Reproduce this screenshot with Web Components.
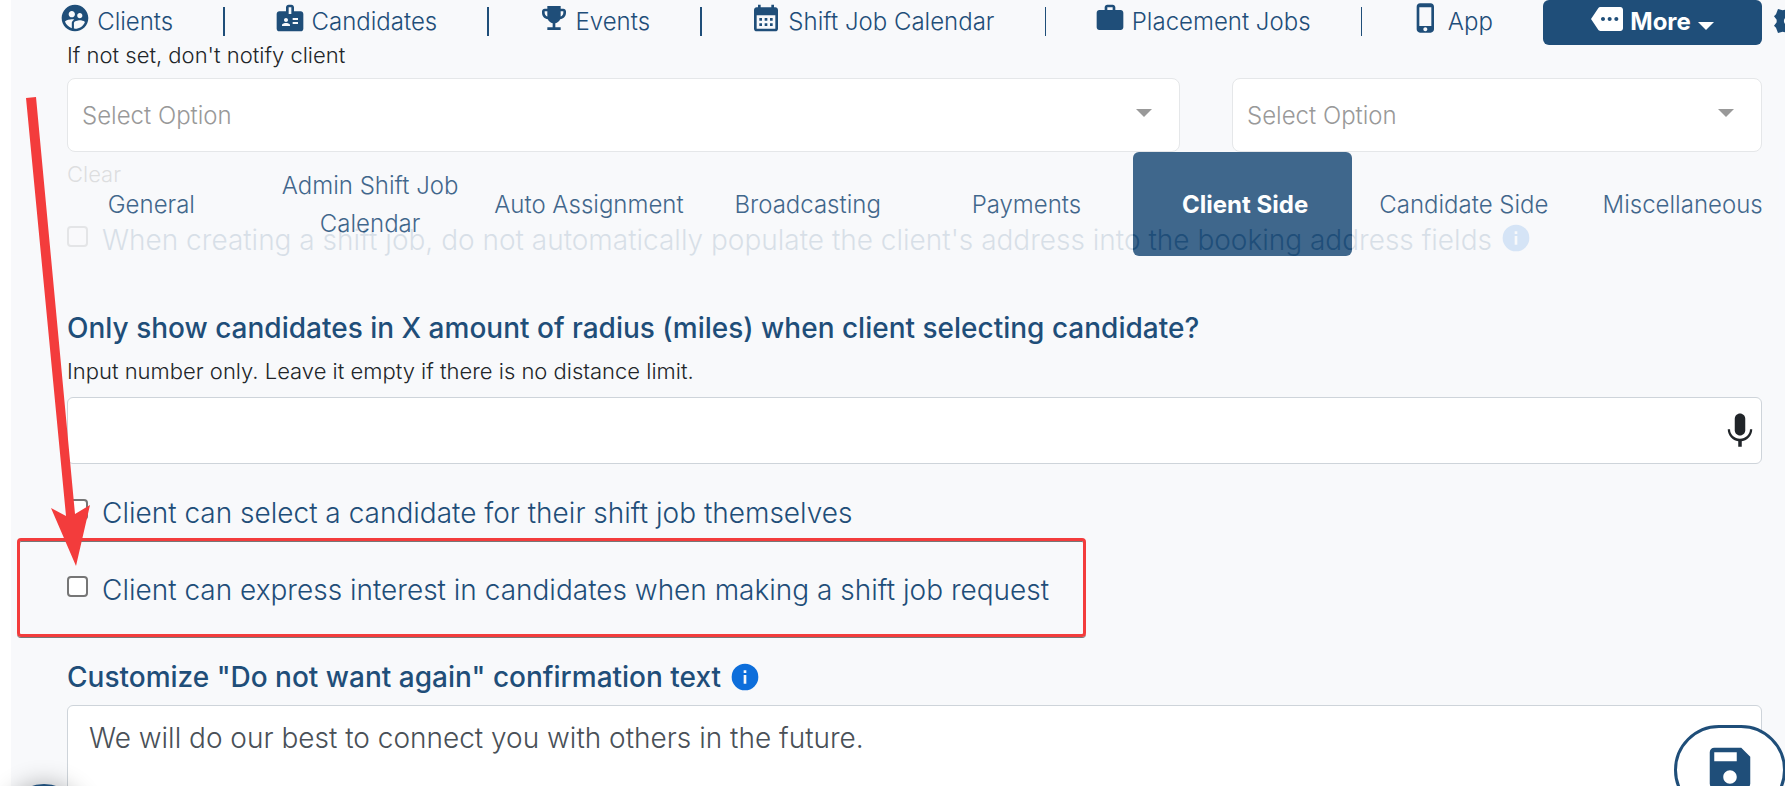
<!DOCTYPE html>
<html lang="en">
<head>
<meta charset="utf-8">
<meta name="viewport" content="width=device-width, initial-scale=1">
<title>Settings - Client Side</title>
<style>
    html {
        --navy: #1f4e79;
        --panel: #f8f9fb;
        --border: #ced4da;
        --info: #0d6edb;
        --red: #f33c3c;
    }

    body {
        margin: 0;
        overflow: hidden;
        background: white;
        color: #212529;
        font: 300 24px/30px Inter, "Liberation Sans", sans-serif;
    }
</style>
</head>
<body>
<settings-page>
    <nav-bar slot="nav">
        <nav-item icon="clients">Clients</nav-item>
        <nav-item icon="badge">Candidates</nav-item>
        <nav-item icon="trophy">Events</nav-item>
        <nav-item icon="calendar" thin>Shift Job Calendar</nav-item>
        <nav-item icon="work" thin>Placement Jobs</nav-item>
        <nav-item icon="phone" last>App</nav-item>
        <more-button slot="end">More</more-button>
        <gear-link slot="end"></gear-link>
    </nav-bar>

    <tab-bar slot="tabs">
        <tab-item>General</tab-item>
        <tab-item>Admin Shift Job Calendar</tab-item>
        <tab-item>Auto Assignment</tab-item>
        <tab-item>Broadcasting</tab-item>
        <tab-item>Payments</tab-item>
        <tab-item active>Client Side</tab-item>
        <tab-item>Candidate Side</tab-item>
        <tab-item>Miscellaneous</tab-item>
    </tab-bar>

    <notify-fields>If not set, don't notify client</notify-fields>
    <check-row info>When creating a shift job, do not automatically populate the client's address into the booking address fields</check-row>
    <radius-field hint="Input number only. Leave it empty if there is no distance limit.">Only show candidates in X amount of radius (miles) when client selecting candidate?</radius-field>
    <check-row>Client can select a candidate for their shift job themselves</check-row>
    <check-row marked>Client can express interest in candidates when making a shift job request</check-row>
    <message-field value="We will do our best to connect you with others in the future.">Customize "Do not want again" confirmation text</message-field>

    <pointer-arrow slot="overlay"></pointer-arrow>
    <save-button slot="overlay"></save-button>
    <help-bubble slot="overlay"></help-bubble>
</settings-page>

<script>
const ICONS = {
    clients: '<path d="M11.99 2c-5.52 0-10 4.48-10 10s4.48 10 10 10 10-4.48 10-10-4.48-10-10-10zm3.61 6.34c1.07 0 1.93.86 1.93 1.93 0 1.07-.86 1.93-1.93 1.93-1.07 0-1.93-.86-1.93-1.93-.01-1.07.86-1.93 1.93-1.93zm-6-1.58c1.3 0 2.36 1.06 2.36 2.36 0 1.3-1.06 2.36-2.36 2.36s-2.36-1.06-2.36-2.36c0-1.31 1.05-2.36 2.36-2.36zm0 9.13v3.75c-2.4-.75-4.3-2.6-5.14-4.96 1.05-1.12 3.67-1.69 5.14-1.69.53 0 1.2.08 1.9.22-1.64.87-1.9 2.02-1.9 2.68zM11.99 20c-.27 0-.53-.01-.79-.04v-4.07c0-1.42 2.94-2.13 4.4-2.13 1.07 0 2.92.39 3.84 1.15C18.28 17.88 15.39 20 11.99 20z"/>',
    badge: '<path d="M20 7h-5V4c0-1.1-.9-2-2-2h-2c-1.1 0-2 .9-2 2v3H4c-1.1 0-2 .9-2 2v11c0 1.1.9 2 2 2h16c1.1 0 2-.9 2-2V9c0-1.1-.9-2-2-2zM9 12c.83 0 1.5.67 1.5 1.5S9.83 15 9 15s-1.5-.67-1.5-1.5S8.17 12 9 12zm3 6H6v-.75c0-1 2-1.5 3-1.5s3 .5 3 1.5V18zm1-9h-2V4h2v5zm5 7.5h-4V15h4v1.5zm0-3h-4V12h4v1.5z"/>',
    trophy: '<path d="M19 5h-2V3H7v2H5c-1.1 0-2 .9-2 2v1c0 2.55 1.92 4.63 4.39 4.94.63 1.5 1.98 2.63 3.61 2.96V19H7v2h10v-2h-4v-3.1c1.63-.33 2.98-1.46 3.61-2.96C19.08 12.63 21 10.55 21 8V7c0-1.1-.9-2-2-2zM5 8V7h2v3.82C5.84 10.4 5 9.3 5 8zm14 0c0 1.3-.84 2.4-2 2.82V7h2v1z"/>',
    calendar: '<path d="M19 4h-1V2h-2v2H8V2H6v2H5c-1.11 0-1.99.9-1.99 2L3 20c0 1.1.89 2 2 2h14c1.1 0 2-.9 2-2V6c0-1.1-.9-2-2-2zm0 16H5V10h14v10zM9 14H7v-2h2v2zm4 0h-2v-2h2v2zm4 0h-2v-2h2v2zm-8 4H7v-2h2v2zm4 0h-2v-2h2v2zm4 0h-2v-2h2v2z"/>',
    work: '<path d="M20 6h-4V4c0-1.1-.9-2-2-2h-4c-1.1 0-2 .9-2 2v2H4c-1.1 0-2 .9-2 2v11c0 1.1.9 2 2 2h16c1.1 0 2-.9 2-2V8c0-1.1-.9-2-2-2zm-6 0h-4V4h4v2z"/>',
    phone: '<path d="M15.5 1h-8C6.12 1 5 2.12 5 3.5v17C5 21.88 6.12 23 7.5 23h8c1.38 0 2.5-1.12 2.5-2.5v-17C18 2.12 16.88 1 15.5 1zm-4 21c-.83 0-1.5-.67-1.5-1.5s.67-1.5 1.5-1.5 1.5.67 1.5 1.5-.67 1.5-1.5 1.5zm4.5-4H7V4h9v14z"/>',
    more: '<path d="M22 3H7c-.69 0-1.23.35-1.59.88L0 12l5.41 8.11c.36.53.9.89 1.59.89h15c1.1 0 2-.9 2-2V5c0-1.1-.9-2-2-2zM9 13.5c-.83 0-1.5-.67-1.5-1.5s.67-1.5 1.5-1.5 1.5.67 1.5 1.5-.67 1.5-1.5 1.5zm5 0c-.83 0-1.5-.67-1.5-1.5s.67-1.5 1.5-1.5 1.5.67 1.5 1.5-.67 1.5-1.5 1.5zm5 0c-.83 0-1.5-.67-1.5-1.5s.67-1.5 1.5-1.5 1.5.67 1.5 1.5-.67 1.5-1.5 1.5z"/>',
    gear: '<path fill-rule="evenodd" d="M6 3l3.500 1L13 3l3 1 3.500-1L21 7l1.500 1.500L20.500 12l2 3.500L21 17l-1.500 4L16 20l-3 1-3.500-1L6 21l-1.500-4-1.500-1.500 2-2.500v-2L3 8.500 4.500 7zM13.800 8.600a3.400 3.400 0 1 0 0 6.800 3.400 3.400 0 0 0 0-6.800z"/>',
    info: '<path fill-rule="evenodd" d="M12 2a10 10 0 1 0 0 20 10 10 0 0 0 0-20zM11 7h2v2h-2zM11 10.5h2V17h-2z"/>',
    mic: '<path d="M12 14.5c1.66 0 3-1.34 3-3V5c0-1.66-1.34-3-3-3S9 3.34 9 5v6.5c0 1.66 1.34 3 3 3z"/><path d="M17.7 11c0 3-2.54 5.4-5.7 5.4S6.300 14 6.300 11H5c0 3.410 2.720 6.430 6 6.900V21h2v-3.100c3.280-.470 6-3.490 6-6.900z"/>',
    save: '<path d="M17 3H5c-1.11 0-2 .9-2 2v14c0 1.1.89 2 2 2h14c1.1 0 2-.9 2-2V7l-4-4zm-5 16c-1.66 0-3-1.34-3-3s1.34-3 3-3 3 1.34 3 3-1.34 3-3 3zm3-10H5V5h10v4z"/>'
};

let nextId = 0;

class BaseElement extends HTMLElement {
    constructor() {
        super();
        this.attachShadow({ mode: 'open' });
    }

    connectedCallback() {
        const template = document.createElement('template');
        template.innerHTML = this.render();
        this.shadowRoot.replaceChildren(template.content.cloneNode(true));
    }
}

class AppIcon extends BaseElement {
    render() {
        return `
      <style>
        :host {
            display: block;
            flex: none;
            width: 32px;
            height: 32px;
        }

        svg {
            display: block;
            width: 100%;
            height: 100%;
            fill: currentColor;
        }
      </style>
      <svg viewBox="0 0 24 24" aria-hidden="true">${ICONS[this.getAttribute('name')]}</svg>
    `;
    }
}

class SettingsPage extends BaseElement {
    render() {
        return `
      <style>
        :host {
            display: block;
            position: relative;
            box-sizing: border-box;
            height: 100vh;
            overflow: hidden;
            margin-left: 11px;
            background: var(--panel);
        }

        main {
            display: flex;
            flex-direction: column;
            align-items: stretch;
            padding: 0 23px 0 56px;
        }

        .tabs {
            position: absolute;
            top: 152px;
            left: 0;
            right: 0;
        }
      </style>
      <slot name="nav"></slot>
      <main><slot></slot></main>
      <div class="tabs"><slot name="tabs"></slot></div>
      <slot name="overlay"></slot>
    `;
    }
}

class NavBar extends BaseElement {
    render() {
        return `
      <style>
        :host {
            display: block;
            height: 40px;
        }

        nav {
            display: flex;
            align-items: flex-start;
        }
      </style>
      <nav aria-label="Main"><slot></slot><slot name="end"></slot></nav>
    `;
    }
}

class NavItem extends BaseElement {
    render() {
        return `
      <style>
        :host {
            flex: 1 1 auto;
            display: flex;
            justify-content: center;
            margin-top: 7px;
            height: 29px;
            border-right: 2px solid var(--navy);
        }

        :host([thin]) {
            border-right-width: 1px;
        }

        :host([last]) {
            border-right: none;
        }

        a {
            display: flex;
            align-items: center;
            gap: 6px;
            padding-right: 2px;
            color: var(--navy);
            text-decoration: none;
            white-space: nowrap;
        }

        app-icon {
            margin-bottom: 8px;
        }
      </style>
      <a href="#"><app-icon name="${this.getAttribute('icon')}"></app-icon><slot></slot></a>
    `;
    }
}

class MoreButton extends BaseElement {
    render() {
        return `
      <style>
        :host {
            display: block;
            flex: none;
            width: 219px;
        }

        button {
            display: flex;
            align-items: center;
            justify-content: center;
            gap: 7px;
            width: 100%;
            height: 45px;
            padding: 0 0 2px;
            border: none;
            border-radius: 6px;
            background: var(--navy);
            color: white;
            font: inherit;
            font-weight: 700;
            cursor: pointer;
        }

        app-icon {
            margin-bottom: 6px;
        }

        .caret {
            border: 8px solid transparent;
            border-top-color: white;
            border-bottom: none;
            margin-top: 8px;
        }
      </style>
      <button type="button"><app-icon name="more"></app-icon><slot></slot><span class="caret"></span></button>
    `;
    }
}

class GearLink extends BaseElement {
    render() {
        return `
      <style>
        :host {
            display: block;
            flex: none;
            width: 23px;
        }

        a {
            display: block;
            color: var(--navy);
            padding: 5px 0 0 8px;
        }
      </style>
      <a href="#" aria-label="Settings"><app-icon name="gear"></app-icon></a>
    `;
    }
}

class TabBar extends BaseElement {
    render() {
        return `
      <style>
        :host {
            display: block;
            opacity: 0.85;
            background: var(--panel);
        }

        nav {
            display: grid;
            grid-template-columns: repeat(8, 1fr);
            margin: 0 -4px 0 28px;
        }
      </style>
      <nav aria-label="Sections"><slot></slot></nav>
    `;
    }
}

class TabItem extends BaseElement {
    render() {
        return `
      <style>
        :host {
            display: block;
        }

        a {
            display: flex;
            align-items: center;
            justify-content: center;
            box-sizing: border-box;
            height: 104px;
            padding: 2px 10px 0 16px;
            border-radius: 6px;
            color: var(--navy);
            line-height: 38px;
            text-align: center;
            text-decoration: none;
        }

        :host([active]) a {
            background: var(--navy);
            color: white;
            font-weight: 700;
        }
      </style>
      <a href="#"><span><slot></slot></span></a>
    `;
    }
}

class OptionSelect extends BaseElement {
    render() {
        return `
      <style>
        :host {
            display: block;
            position: relative;
        }

        select {
            appearance: none;
            display: block;
            width: 100%;
            height: 74px;
            padding: 2px 56px 0 14px;
            border: 1px solid #e5e7e9;
            border-radius: 8px;
            background: white;
            color: #999;
            font: inherit;
        }

        /* drop-down arrow over the select */
        span {
            position: absolute;
            right: 28px;
            top: 31px;
            border: 8px solid transparent;
            border-top-color: #999;
            border-bottom: none;
            pointer-events: none;
        }
      </style>
      <select aria-label="${this.getAttribute('label')}"><option>Select Option</option></select>
      <span></span>
    `;
    }
}

class NotifyFields extends BaseElement {
    render() {
        return `
      <style>
        :host {
            display: block;
        }

        p {
            margin: 0 0 8px;
            font-size: 22px;
        }

        .row {
            display: grid;
            grid-template-columns: 21fr 10fr;
            gap: 52px;
        }

        a {
            display: inline-block;
            margin-top: 7px;
            color: #444;
            font-size: 22px;
            text-decoration: none;
        }
      </style>
      <p><slot></slot></p>
      <div class="row">
        <option-select label="Notify client"></option-select>
        <option-select label="Notify period"></option-select>
      </div>
      <a href="#">Clear</a>
    `;
    }
}

class CheckRow extends BaseElement {
    render() {
        const id = `check-${nextId++}`;
        const info = this.hasAttribute('info') ? '<app-icon name="info"></app-icon>' : '';
        return `
      <style>
        :host {
            display: flex;
            align-items: center;
            align-self: flex-start;
            position: relative;
            margin-bottom: 37px;
            color: var(--navy);
            font-size: 28px;
            line-height: 40px;
        }

        :host([info]) {
            margin: 31px 0 48px;
        }

        :host([marked]) {
            margin-bottom: 47px;
        }

        input {
            appearance: none;
            flex: none;
            box-sizing: border-box;
            width: 21px;
            height: 21px;
            margin: 0 14px 8px 0;
            border: 2px solid #767676;
            border-radius: 4px;
            background: white;
        }

        input:checked {
            background: var(--navy);
        }

        app-icon {
            margin: 0 0 4px 8px;
            color: var(--info);
        }

        /* red frame around a marked option */
        :host([marked])::after {
            content: "";
            position: absolute;
            inset: -32px -37px -27px -50px;
            border: 3px solid var(--red);
            border-radius: 4px;
            box-shadow: 0 1px 0 #777, inset 0 1px 0 #777;
            pointer-events: none;
        }
      </style>
      <input type="checkbox" id="${id}">
      <label for="${id}"><slot></slot></label>
      ${info}
    `;
    }
}

class RadiusField extends BaseElement {
    render() {
        return `
      <style>
        :host {
            display: block;
            margin-bottom: 29px;
        }

        label {
            display: block;
            color: var(--navy);
            font-size: 28px;
            font-weight: 500;
            line-height: 40px;
        }

        p {
            margin: 8px 0 11px;
            font-size: 22px;
        }

        .box {
            display: flex;
            align-items: center;
            height: 65px;
            border: 1px solid var(--border);
            border-radius: 6px;
            background: white;
        }

        input {
            flex: 1;
            min-width: 0;
            height: 100%;
            box-sizing: border-box;
            padding: 0 21px;
            border: none;
            background: none;
            font: inherit;
            font-size: 28px;
        }

        button {
            padding: 0;
            border: none;
            background: none;
            color: #212529;
        }

        app-icon {
            width: 42px;
            height: 42px;
        }
      </style>
      <label for="radius"><slot></slot></label>
      <p>${this.getAttribute('hint')}</p>
      <div class="box">
        <input id="radius" type="text" inputmode="numeric">
        <button type="button" aria-label="Dictate"><app-icon name="mic"></app-icon></button>
      </div>
    `;
    }
}

class MessageField extends BaseElement {
    render() {
        return `
      <style>
        :host {
            display: block;
        }

        .head {
            display: flex;
            align-items: center;
            gap: 8px;
            margin-bottom: 8px;
            color: var(--navy);
            font-size: 28px;
            font-weight: 500;
            line-height: 40px;
        }

        app-icon {
            color: var(--info);
        }

        textarea {
            display: block;
            box-sizing: border-box;
            width: 100%;
            height: 120px;
            padding: 11px 21px;
            border: 1px solid var(--border);
            border-radius: 6px;
            background: white;
            color: #495057;
            font: inherit;
            font-size: 28px;
            line-height: 42px;
            resize: none;
        }
      </style>
      <div class="head"><label for="message"><slot></slot></label><app-icon name="info"></app-icon></div>
      <textarea id="message">${this.getAttribute('value')}</textarea>
    `;
    }
}

class PointerArrow extends BaseElement {
    render() {
        return `
      <style>
        :host {
            position: absolute;
            left: 15px;
            top: 97px;
            pointer-events: none;
        }

        svg {
            display: block;
            fill: var(--red);
        }
      </style>
      <svg width="66" height="470" viewBox="0 0 66 470" aria-hidden="true">
        <path d="M0 1 10 0 49 417 64 408 50 469 25 411 40 419z"/>
      </svg>
    `;
    }
}

class SaveButton extends BaseElement {
    render() {
        return `
      <style>
        :host {
            position: fixed;
            right: -1px;
            bottom: -29px;
        }

        button {
            display: flex;
            align-items: center;
            justify-content: center;
            box-sizing: border-box;
            width: 112px;
            height: 90px;
            padding: 0 0 4px;
            border: 3px solid var(--navy);
            border-radius: 45px;
            background: white;
            color: var(--navy);
        }

        app-icon {
            width: 54px;
            height: 54px;
        }
      </style>
      <button type="button" aria-label="Save"><app-icon name="save"></app-icon></button>
    `;
    }
}

class HelpBubble extends BaseElement {
    render() {
        return `
      <style>
        :host {
            position: fixed;
            left: 4px;
            bottom: -78px;
        }

        button {
            display: block;
            width: 80px;
            height: 80px;
            border: none;
            border-radius: 50%;
            background: var(--navy);
            box-shadow: 0 0 24px rgb(0 0 0 / 30%);
        }
      </style>
      <button type="button" aria-label="Help"></button>
    `;
    }
}

customElements.define('app-icon', AppIcon);
customElements.define('option-select', OptionSelect);
customElements.define('nav-item', NavItem);
customElements.define('more-button', MoreButton);
customElements.define('gear-link', GearLink);
customElements.define('nav-bar', NavBar);
customElements.define('tab-item', TabItem);
customElements.define('tab-bar', TabBar);
customElements.define('notify-fields', NotifyFields);
customElements.define('check-row', CheckRow);
customElements.define('radius-field', RadiusField);
customElements.define('message-field', MessageField);
customElements.define('pointer-arrow', PointerArrow);
customElements.define('save-button', SaveButton);
customElements.define('help-bubble', HelpBubble);
customElements.define('settings-page', SettingsPage);
</script>
</body>
</html>
